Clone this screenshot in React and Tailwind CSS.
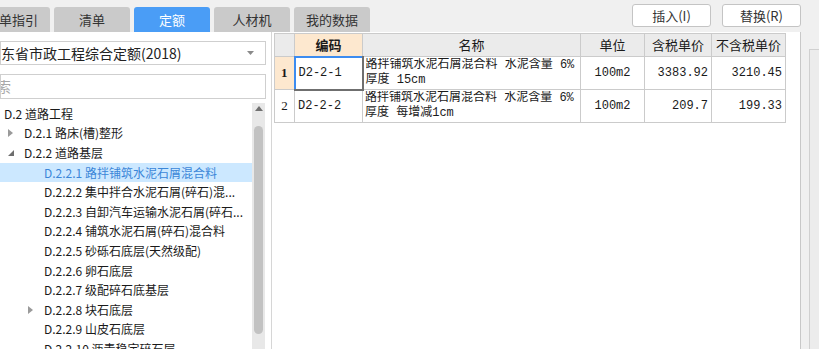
import React from "react";

const ui = { fontFamily: '"Noto Sans CJK SC", "Noto Sans", sans-serif' };
const cell = { fontFamily: '"Liberation Mono", "Noto Sans CJK SC", monospace' };

const tabs = [
  { name: "清单指引" },
  { name: "清单" },
  { name: "定额", active: true },
  { name: "人材机" },
  { name: "我的数据" },
];

const tree = [
  { level: 0, text: "D.2 道路工程" },
  { level: 1, arrow: "right", text: "D.2.1 路床(槽)整形" },
  { level: 1, arrow: "down", text: "D.2.2 道路基层" },
  { level: 2, text: "D.2.2.1 路拌铺筑水泥石屑混合料", selected: true },
  { level: 2, text: "D.2.2.2 集中拌合水泥石屑(碎石)混..." },
  { level: 2, text: "D.2.2.3 自卸汽车运输水泥石屑(碎石..." },
  { level: 2, text: "D.2.2.4 铺筑水泥石屑(碎石)混合料" },
  { level: 2, text: "D.2.2.5 砂砾石底层(天然级配)" },
  { level: 2, text: "D.2.2.6 卵石底层" },
  { level: 2, text: "D.2.2.7 级配碎石底基层" },
  { level: 2, arrow: "right", text: "D.2.2.8 块石底层" },
  { level: 2, text: "D.2.2.9 山皮石底层" },
  { level: 2, text: "D.2.2.10 沥青稳定碎石层" },
];

const rows = [
  {
    no: "1",
    code: "D2-2-1",
    name: ["路拌铺筑水泥石屑混合料 水泥含量 6%", "厚度 15cm"],
    unit: "100m2",
    tax: "3383.92",
    noTax: "3210.45",
    active: true,
  },
  {
    no: "2",
    code: "D2-2-2",
    name: ["路拌铺筑水泥石屑混合料 水泥含量 6%", "厚度 每增减1cm"],
    unit: "100m2",
    tax: "209.7",
    noTax: "199.33",
  },
];

function Arrow({ dir }) {
  if (dir === "down") {
    return (
      <svg width="6" height="6" viewBox="0 0 6 6">
        <path d="M6 0 L6 6 L0 6 Z" fill="#6e6e6e" />
      </svg>
    );
  }
  return (
    <svg width="5" height="8" viewBox="0 0 5 8">
      <path d="M0 0 L5 4 L0 8 Z" fill="#9a9a9a" />
    </svg>
  );
}

function TreeRow({ item }) {
  const pad = item.level === 0 ? "pl-[4px]" : item.level === 1 ? "pl-[24px]" : "pl-[44px]";
  const arrowPos = item.level === 1 ? "left-[8px]" : "left-[28px]";
  return (
    <div
      className={`relative h-[19.6px] flex items-center text-[12px] ${pad} ${
        item.selected ? "bg-[#cce8ff] text-[#3b86d8]" : "text-[#1a1a1a]"
      }`}
    >
      {item.arrow && (
        <span className={`absolute ${arrowPos} top-0 h-full flex items-center`}>
          <Arrow dir={item.arrow} />
        </span>
      )}
      <span className="whitespace-nowrap">{item.text}</span>
    </div>
  );
}

const App = () => {
  return (
    <div className="w-[819px] h-[349px] overflow-hidden bg-white flex flex-col" style={ui}>
      {/* top bar */}
      <div className="h-[32px] shrink-0 bg-[#f0f0f0] flex items-end relative">
        <div className="flex gap-[4px] -ml-[26px]">
          {tabs.map((t) => (
            <div
              key={t.name}
              className={`w-[76px] h-[25px] rounded-t-[3px] flex items-center justify-center text-[13px] ${
                t.active ? "bg-[#4a9df6] text-white" : "bg-[#cacaca] text-[#333]"
              }`}
            >
              {t.name}
            </div>
          ))}
        </div>
        <div className="ml-auto mr-[18px] mb-[5px] flex gap-[11px]">
          <button className="w-[79px] h-[23px] bg-white border border-[#c4c4c4] rounded-[3px] text-[13px] text-[#333]">
            插入(I)
          </button>
          <button className="w-[79px] h-[23px] bg-white border border-[#c4c4c4] rounded-[3px] text-[13px] text-[#333]">
            替换(R)
          </button>
        </div>
      </div>

      <div className="flex flex-1 min-h-0">
        {/* left panel */}
        <div className="w-[272px] shrink-0 border-r border-[#d6d6d6] flex flex-col overflow-hidden">
          <div className="mt-[9px] h-[24px] w-[266px] border border-[#cfcfcf] flex items-center relative overflow-hidden">
            <span className="absolute left-[-14px] text-[14px] text-[#222] whitespace-nowrap">
              广东省市政工程综合定额(2018)
            </span>
            <svg className="absolute right-[11px]" width="7" height="4" viewBox="0 0 7 4">
              <path d="M0 0 L7 0 L3.5 4 Z" fill="#8a8a8a" />
            </svg>
          </div>
          <div className="mt-[9px] h-[25px] w-[266px] border border-[#cfcfcf] flex items-center relative overflow-hidden">
            <span className="absolute left-[-18px] text-[14px] text-[#a8a8a8] whitespace-nowrap">搜索</span>
          </div>
          <div className="mt-[4px] flex flex-1 min-h-0">
            <div className="w-[252px] shrink-0 pt-[1px] overflow-hidden">
              {tree.map((it) => (
                <TreeRow key={it.text} item={it} />
              ))}
            </div>
            <div className="w-[13px] bg-[#e8e8e8] flex flex-col items-center">
              <svg className="mt-[3px]" width="8" height="5" viewBox="0 0 8 5">
                <path d="M0 5 L4 0 L8 5 Z" fill="#707070" />
              </svg>
              <div className="mt-[15px] w-[9px] h-[208px] rounded-full bg-[#c2c2c2]" />
            </div>
          </div>
        </div>

        {/* right panel */}
        <div className="flex-1 flex">
          <div className="flex-1 pl-[2px] pt-[1px] border-r border-[#c8c8c8]">
            <table className="border-collapse text-[#1a1a1a]" style={{ tableLayout: "fixed" }}>
              <colgroup>
                <col className="w-[20px]" />
                <col className="w-[68px]" />
                <col className="w-[218px]" />
                <col className="w-[64px]" />
                <col className="w-[67px]" />
                <col className="w-[74px]" />
              </colgroup>
              <thead>
                <tr className="h-[23px] text-[13px]">
                  <th className="border border-[#cbcbcb] bg-[#ebebeb]" />
                  <th className="border border-[#cbcbcb] bg-[#fde8cf] font-bold">编码</th>
                  <th className="border border-[#cbcbcb] bg-[#ebebeb] font-normal">名称</th>
                  <th className="border border-[#cbcbcb] bg-[#ebebeb] font-normal">单位</th>
                  <th className="border border-[#cbcbcb] bg-[#ebebeb] font-normal">含税单价</th>
                  <th className="border border-[#cbcbcb] bg-[#ebebeb] font-normal">不含税单价</th>
                </tr>
              </thead>
              <tbody>
                {rows.map((r) => (
                  <tr key={r.no} className="h-[33px] text-[12px]">
                    <td
                      className={`border border-[#cbcbcb] text-center text-[13px] ${
                        r.active ? "bg-[#fde8cf] font-bold" : ""
                      }`}
                      style={{ fontFamily: '"Liberation Serif", serif' }}
                    >
                      {r.no}
                    </td>
                    <td
                      className={`px-[3px] ${
                        r.active
                          ? "border-2 border-t-[#3c8cf0] border-l-[#3c8cf0] border-r-[#6f6f6f] border-b-[#6f6f6f]"
                          : "border border-[#cbcbcb]"
                      }`}
                      style={cell}
                    >
                      {r.code}
                    </td>
                    <td className="border border-[#cbcbcb] px-[2px] leading-[15px]" style={cell}>
                      <div className="whitespace-nowrap overflow-hidden">{r.name[0]}</div>
                      <div className="whitespace-nowrap">{r.name[1]}</div>
                    </td>
                    <td className="border border-[#cbcbcb] text-center" style={cell}>
                      {r.unit}
                    </td>
                    <td className="border border-[#cbcbcb] text-right pr-[3px]" style={cell}>
                      {r.tax}
                    </td>
                    <td className="border border-[#cbcbcb] text-right pr-[3px]" style={cell}>
                      {r.noTax}
                    </td>
                  </tr>
                ))}
              </tbody>
            </table>
          </div>
          <div className="w-[18px] bg-[#f0f0f0] flex flex-col">
            <div className="h-[17px]" />
            <div className="flex-1 ml-[8px] border-l border-t border-[#d0d0d0] bg-[#ececec]" />
          </div>
        </div>
      </div>
    </div>
  );
};

export default App;
